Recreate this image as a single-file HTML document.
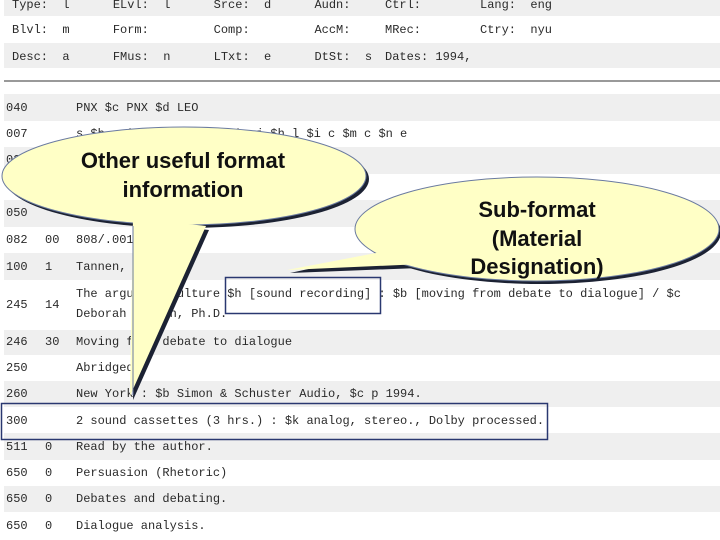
<!DOCTYPE html>
<html><head><meta charset="utf-8"><style>
body{margin:0;width:720px;height:540px;overflow:hidden;background:#fff;position:relative;font-family:"Liberation Mono",monospace;font-size:12px;color:#2a2a2a}
.b{position:absolute;left:4px;right:0}
.g{background:#efefef}
.t{position:absolute;white-space:pre;line-height:14px}
svg{position:absolute;left:0;top:0}
</style></head><body>
<div class="b g" style="top:0;height:16px"></div>
<div class="b g" style="top:43px;height:25px"></div>
<div style="position:absolute;left:4px;right:0;top:80px;height:2px;background:#999"></div>
<div class="b g" style="top:94px;height:27px"></div>
<div class="b g" style="top:147px;height:27px"></div>
<div class="b g" style="top:200px;height:27px"></div>
<div class="b g" style="top:253px;height:27px"></div>
<div class="b g" style="top:330px;height:25px"></div>
<div class="b g" style="top:381px;height:26px"></div>
<div class="b g" style="top:433px;height:27px"></div>
<div class="b g" style="top:486px;height:26px"></div>

<div class="t" style="left:12px;top:-2px">Type:  l      ELvl:  l      Srce:  d      Audn:</div>
<div class="t" style="left:385px;top:-2px">Ctrl:</div><div class="t" style="left:480px;top:-2px">Lang:  eng</div>
<div class="t" style="left:12px;top:23px">Blvl:  m      Form:         Comp:         AccM:</div>
<div class="t" style="left:385px;top:23px">MRec:</div><div class="t" style="left:480px;top:23px">Ctry:  nyu</div>
<div class="t" style="left:12px;top:50px">Desc:  a      FMus:  n      LTxt:  e      DtSt:  s</div>
<div class="t" style="left:385px;top:50px">Dates: 1994,</div>

<div class="t" style="left:6px;top:101px">040</div><div class="t" style="left:76px;top:101px">PNX $c PNX $d LEO</div>
<div class="t" style="left:6px;top:127px">007</div><div class="t" style="left:76px;top:127px">s $b s $d l $e u $f n $g j $h l $i c $m c $n e</div>
<div class="t" style="left:6px;top:153px">020</div>
<div class="t" style="left:6px;top:206px">050</div>
<div class="t" style="left:6px;top:233px">082</div><div class="t" style="left:45px;top:233px">00</div><div class="t" style="left:76px;top:233px">808/.001</div>
<div class="t" style="left:6px;top:260px">100</div><div class="t" style="left:45px;top:260px">1</div><div class="t" style="left:76px;top:260px">Tannen, Deborah.</div>
<div class="t" style="left:6px;top:298px">245</div><div class="t" style="left:45px;top:298px">14</div>
<div class="t" style="left:76px;top:287px">The argument culture $h [sound recording] : $b [moving from debate to dialogue] / $c</div>
<div class="t" style="left:76px;top:307px">Deborah Tannen, Ph.D.</div>
<div class="t" style="left:6px;top:335px">246</div><div class="t" style="left:45px;top:335px">30</div><div class="t" style="left:76px;top:335px">Moving from debate to dialogue</div>
<div class="t" style="left:6px;top:361px">250</div><div class="t" style="left:76px;top:361px">Abridged.</div>
<div class="t" style="left:6px;top:387px">260</div><div class="t" style="left:76px;top:387px">New York : $b Simon &amp; Schuster Audio, $c p 1994.</div>
<div class="t" style="left:6px;top:414px">300</div><div class="t" style="left:76px;top:414px">2 sound cassettes (3 hrs.) : $k analog, stereo., Dolby processed.</div>
<div class="t" style="left:6px;top:440px">511</div><div class="t" style="left:45px;top:440px">0</div><div class="t" style="left:76px;top:440px">Read by the author.</div>
<div class="t" style="left:6px;top:466px">650</div><div class="t" style="left:45px;top:466px">0</div><div class="t" style="left:76px;top:466px">Persuasion (Rhetoric)</div>
<div class="t" style="left:6px;top:492px">650</div><div class="t" style="left:45px;top:492px">0</div><div class="t" style="left:76px;top:492px">Debates and debating.</div>
<div class="t" style="left:6px;top:519px">650</div><div class="t" style="left:45px;top:519px">0</div><div class="t" style="left:76px;top:519px">Dialogue analysis.</div>

<svg width="720" height="540">
<rect x="1.5" y="403.5" width="546" height="36" fill="none" stroke="#2a3870" stroke-width="1.5"/>
<rect x="225.5" y="277.5" width="155" height="36" fill="none" stroke="#2a3870" stroke-width="1.5"/>
<g fill="#1c2233">
<path d="M136 222 L209 230 L133 400 Z"/>
<ellipse cx="187" cy="179" rx="182" ry="49"/>
<path d="M405 248 L470 266 L290 273 Z"/>
<ellipse cx="540" cy="232" rx="181" ry="52"/>
</g>
<g fill="#ffffc6" stroke="#6a7aa0" stroke-width="1">
<ellipse cx="184" cy="176" rx="182" ry="49"/>
<path d="M133 218 L206 226 L130 396 Z" stroke="none"/>
<line x1="133" y1="226" x2="133" y2="395"/>
<ellipse cx="537" cy="229" rx="182" ry="52"/>
<path d="M402 248 L467 262 L287 270 Z" stroke="none"/>
</g>
<g font-family="'Liberation Sans',sans-serif" font-weight="bold" font-size="22" fill="#111" text-anchor="middle">
<text x="183" y="168">Other useful format</text>
<text x="183" y="197">information</text>
<text x="537" y="217">Sub-format</text>
<text x="537" y="246">(Material</text>
<text x="537" y="274">Designation)</text>
</g>
</svg>
</body></html>
